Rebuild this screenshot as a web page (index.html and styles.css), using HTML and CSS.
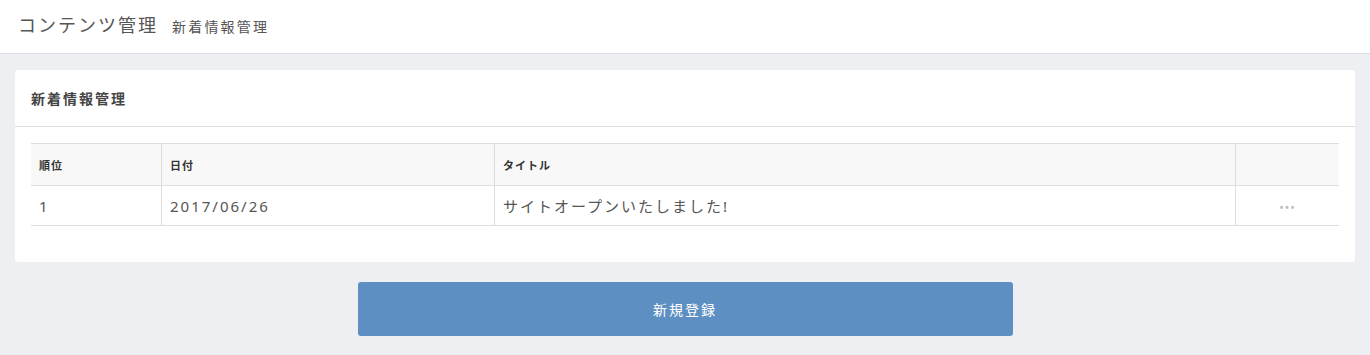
FILE: index.html
```html
<!DOCTYPE html>
<html lang="ja">
<head>
    <meta charset="UTF-8">
    <meta name="viewport" content="width=device-width, initial-scale=1.0">
    <title>新着情報管理</title>
    <link rel="stylesheet" href="styles.css">
</head>
<body>
    <header class="page-header">
        <h1 class="page-title">コンテンツ管理</h1>
        <span class="page-sub">新着情報管理</span>
    </header>

    <main class="content">
        <section class="card">
            <div class="card-head">新着情報管理</div>
            <div class="card-body">
                <table class="news-table">
                    <thead>
                        <tr>
                            <th class="col-rank">順位</th>
                            <th class="col-date">日付</th>
                            <th class="col-title">タイトル</th>
                            <th class="col-menu"></th>
                        </tr>
                    </thead>
                    <tbody>
                        <tr>
                            <td>1</td>
                            <td>2017/06/26</td>
                            <td>サイトオープンいたしました!</td>
                            <td class="menu-cell"><span class="dots">•••</span></td>
                        </tr>
                    </tbody>
                </table>
            </div>
        </section>

        <div class="actions">
            <button class="btn-new">新規登録</button>
        </div>
    </main>
</body>
</html>
```

FILE: styles.css
```css
body {
    font-family: 'Noto Sans', 'Noto Sans CJK JP', sans-serif;
    background-color: #eeeff3;
    color: #555;
    margin: 0;
}

.page-header {
    display: flex;
    align-items: baseline;
    height: 54px;
    box-sizing: border-box;
    padding: 11px 18px 0;
    background-color: white;
    border-bottom: 1px solid #dfe0e4;
}

.page-title {
    margin: 0;
    font-size: 18px;
    font-weight: normal;
    letter-spacing: 2px;
    color: #555;
}

.page-sub {
    margin-left: 14px;
    font-size: 14px;
    letter-spacing: 2.2px;
    color: #555;
}

.content {
    padding: 16px 15px 0;
}

.card {
    background-color: white;
    border-radius: 3px;
}

.card-head {
    height: 57px;
    box-sizing: border-box;
    padding: 18px 16px 0;
    font-size: 14px;
    font-weight: bold;
    letter-spacing: 2px;
    color: #444;
    border-bottom: 1px solid #dcdcdc;
}

.card-body {
    padding: 16px 16px 36px;
}

.news-table {
    width: 100%;
    border-collapse: collapse;
    border-top: 1px solid #ddd;
}

.news-table th,
.news-table td {
    text-align: left;
    border-bottom: 1px solid #ddd;
    border-left: 1px solid #ddd;
    padding: 0 8px;
}

.news-table th:first-child,
.news-table td:first-child {
    border-left: none;
}

.news-table th {
    height: 41px;
    background-color: #f8f8f8;
    font-size: 11px;
    font-weight: bold;
    letter-spacing: 1px;
    color: #333;
}

.news-table td {
    height: 39px;
    font-size: 15px;
    letter-spacing: 2px;
    color: #555;
}

.col-rank { width: 114px; }
.col-date { width: 316px; }
.col-menu { width: 87px; }

.menu-cell {
    text-align: center !important;
}

.dots {
    font-size: 12px;
    letter-spacing: 1px;
    color: #bbb;
}

.actions {
    display: flex;
    justify-content: center;
    padding-top: 20px;
}

.btn-new {
    width: 655px;
    height: 54px;
    background-color: #5e8fc2;
    color: white;
    border: none;
    border-radius: 3px;
    font-family: inherit;
    font-size: 14px;
    letter-spacing: 2px;
    cursor: pointer;
}
```
